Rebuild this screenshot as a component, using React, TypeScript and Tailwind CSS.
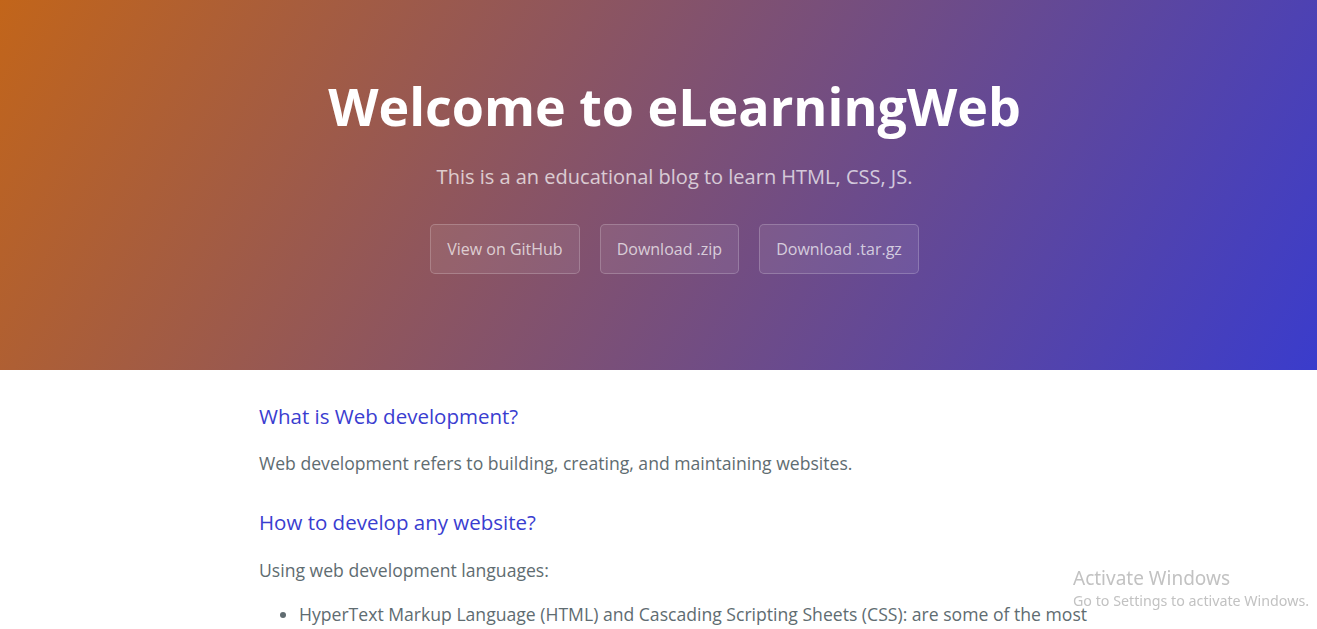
import React from 'react'

const links = [
  { label: 'View on GitHub', href: '#' },
  { label: 'Download .zip', href: '#' },
  { label: 'Download .tar.gz', href: '#' }
]

const App: React.FC = () => {
  return (
    <div className="min-h-screen bg-white font-['Open_Sans',sans-serif] text-[#606c71]">
      {/* Header */}
      <section className="bg-[linear-gradient(120deg,#c2651a,#3a3ccc)] pt-[67px] pb-[96px] pl-8 text-center text-white">
        <h1 className="text-[52px] leading-[78px] font-bold">Welcome to eLearningWeb</h1>
        <h2 className="mt-[17px] text-[20px] leading-[30px] font-normal opacity-70">
          This is a an educational blog to learn HTML, CSS, JS.
        </h2>
        <div className="mt-8 flex justify-center gap-5">
          {links.map((link) => (
            <a
              key={link.label}
              href={link.href}
              className="rounded-[5px] border border-white/20 bg-white/[0.08] px-4 py-3 text-base leading-6 text-white/70"
            >
              {link.label}
            </a>
          ))}
        </div>
      </section>

      {/* Main content */}
      <section className="ml-[259px] w-[832px] pt-[31px] pb-8 text-[17.6px] leading-[26.4px]">
        <h2 className="mb-[18px] text-[20.5px] leading-[31px] font-normal text-[#3a3dd0]">What is Web development?</h2>
        <p className="mb-4">Web development refers to building, creating, and maintaining websites.</p>

        <h2 className="mt-[31px] mb-[19px] text-[20.5px] leading-[31px] font-normal text-[#3a3dd0]">How to develop any website?</h2>
        <p className="mb-[17px]">Using web development languages:</p>
        <ul className="list-disc pl-10">
          <li>
            HyperText Markup Language (HTML) and Cascading Scripting Sheets (CSS): are some of the most important
            languages used to build the structure and style of web pages.
          </li>
          <li>JavaScript (JS): adds interactivity and dynamic behaviour to websites.</li>
        </ul>
      </section>

      {/* Windows watermark */}
      <div className="pointer-events-none fixed top-[565px] left-[1073px] font-['Noto_Sans',sans-serif] text-[#c2c2c2]">
        <div className="text-[19px] leading-[26px]">Activate Windows</div>
        <div className="text-[14.25px] leading-[20px]">Go to Settings to activate Windows.</div>
      </div>
    </div>
  )
}

export default App
